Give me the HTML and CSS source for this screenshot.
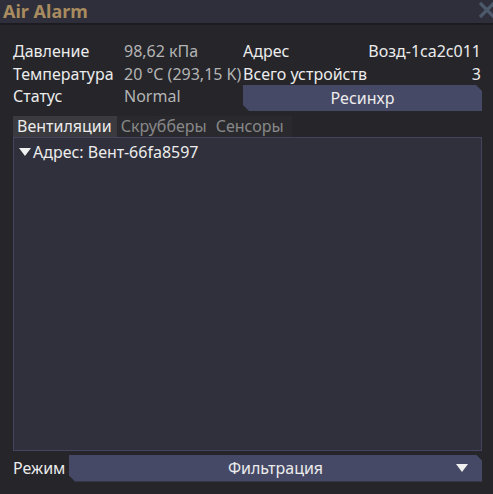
FILE: index.html
```html
<!DOCTYPE html>
<html lang="ru">
<head>
<meta charset="UTF-8" />
<title>Air Alarm</title>
<link rel="stylesheet" href="styles.css">
</head>
<body>
  <div class="window">
    <div class="titlebar">
      <span class="title">Air Alarm</span>
      <svg class="close" width="18" height="18" viewBox="0 0 18 18">
        <line x1="2" y1="2" x2="16" y2="16" />
        <line x1="16" y1="2" x2="2" y2="16" />
      </svg>
    </div>

    <div class="content">
      <div class="info">
        <span class="label">Давление</span>
        <span class="value">98,62 кПа</span>
        <span class="label">Адрес</span>
        <span class="value right">Возд-1ca2c011</span>

        <span class="label">Температура</span>
        <span class="value">20 °C (293,15 K)</span>
        <span class="label">Всего устройств</span>
        <span class="value right">3</span>

        <span class="label top">Статус</span>
        <span class="value top">Normal</span>
        <button class="btn resync">Ресинхр</button>
      </div>

      <div class="tabs">
        <span class="tab active">Вентиляции</span>
        <span class="tab">Скрубберы</span>
        <span class="tab">Сенсоры</span>
      </div>

      <div class="panel">
        <div class="device"><span class="tri"></span>Адрес: Вент-66fa8597</div>
      </div>

      <div class="mode">
        <span class="label">Режим</span>
        <div class="btn select">
          <span>Фильтрация</span>
          <span class="tri arrow"></span>
        </div>
      </div>
    </div>
  </div>
</body>
</html>
```

FILE: styles.css
```css
body { margin: 0; background: #25252a; font-family: "Noto Sans", sans-serif; font-size: 16px; color: #e8e8e8; }
.window { width: 493px; height: 494px; display: flex; flex-direction: column; overflow: hidden; }
.titlebar { height: 23px; background: #2f2f3b; border-bottom: 2px solid #1b1b20; display: flex; align-items: center; justify-content: space-between; padding-left: 3px; }
.title { font-weight: bold; font-size: 18px; color: #a88b5e; margin-top: -2px; }
.close { margin-right: -3px; margin-top: -4px; }
.close line { stroke: #4b596a; stroke-width: 3.2; }
.content { flex: 1; display: flex; flex-direction: column; padding: 14px 11px 12px 13px; }
.info { display: grid; grid-template-columns: 111px 119px 1fr auto; grid-template-rows: 23px 23px 26px; align-items: center; white-space: nowrap; }
.label { color: #ececec; }
.value { color: #b4b4b4; }
.top { align-self: start; line-height: 22px; }
.value.right { text-align: right; color: #ececec; padding-right: 1px; }
.btn { background: #464966; color: #ececec; border: none; font: inherit; clip-path: polygon(0 0, calc(100% - 6px) 0, 100% 6px, 100% 100%, 6px 100%, 0 calc(100% - 6px)); }
.resync { grid-column: 3 / 5; height: 26px; padding: 0; }
.tabs { display: flex; margin-top: 5px; height: 21px; align-self: flex-start; background: #2a2a2e; padding-right: 3px; }
.tab { padding: 0 5px 0 4px; color: #888888; line-height: 21px; }
.tab.active { background: #3b3b3f; color: #ececec; }
.panel { flex: 1; background: #30303c; border: 1px solid #43445e; padding: 3px 5px; }
.device { color: #ececec; display: flex; align-items: center; gap: 2px; }
.tri { display: inline-block; width: 0; height: 0; border-left: 6px solid transparent; border-right: 6px solid transparent; border-top: 8px solid #f0f0f0; }
.mode { display: flex; align-items: center; margin-top: 3px; height: 28px; }
.mode .label { width: 56px; }
.select { flex: 1; height: 27px; display: flex; align-items: center; justify-content: center; position: relative; }
.arrow { position: absolute; right: 14px; top: 9px; }
```
